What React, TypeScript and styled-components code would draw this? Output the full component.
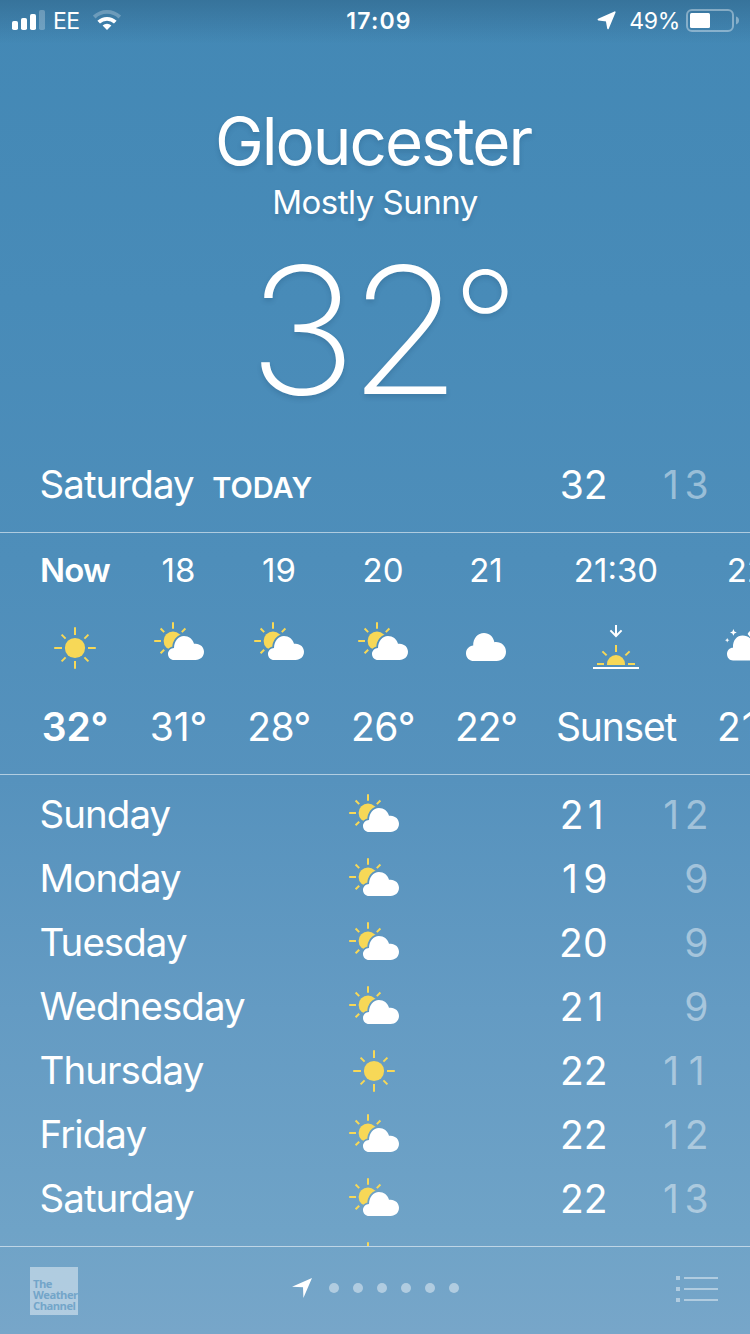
import React, { useId } from "react";
import styled, { createGlobalStyle } from "styled-components";

const GlobalStyle = createGlobalStyle`
  *, *::before, *::after { box-sizing: border-box; }
  html, body { margin: 0; padding: 0; }
  body { background: #4589b6; }
  svg { display: block; flex: none; }
`;

const SUN = "#f7d857";
const LINE = "rgba(255, 255, 255, 0.55)";
const FAINT = "rgba(255, 255, 255, 0.44)";

const Screen = styled.div`
  width: 750px;
  height: 1334px;
  overflow: hidden;
  display: flex;
  flex-direction: column;
  color: #fff;
  font-family: "Inter", "Liberation Sans", sans-serif;
  font-weight: 400;
  background:
    linear-gradient(to bottom, rgba(20, 55, 80, 0.26) 0, rgba(20, 55, 80, 0) 44px),
    linear-gradient(to bottom, #4388b5 0, #488bb8 300px, #4e8eba 560px, #5692bd 780px, #649bc3 1010px, #6fa3c7 1230px, #77a6c9 1334px);
`;

const StatusBar = styled.header`
  display: grid;
  grid-template-columns: 1fr auto 1fr;
  align-items: center;
  height: 40px;
  padding: 0 11px 0 12px;
  font-size: 23px;
  line-height: 38px;
`;

const StatusSide = styled.div<{ $end?: boolean }>`
  display: flex;
  align-items: center;
  justify-content: ${(p) => (p.$end ? "flex-end" : "flex-start")};
`;

const Carrier = styled.span`
  padding-top: 2px;
  margin: 0 13px 0 8px;
  letter-spacing: -0.5px;
`;

const Clock = styled.span`
  padding: 2px 0 0 7px;
  font-weight: 600;
  letter-spacing: 1.2px;
`;

const ArrowSlot = styled.span`
  padding-top: 1px;
`;

const Percent = styled.span`
  padding-top: 2px;
  margin: 0 6px 0 12px;
  letter-spacing: -0.3px;
`;

const Summary = styled.section`
  display: flex;
  flex-direction: column;
  align-items: center;
  padding-top: 61px;
  text-shadow: 0 3px 5px rgba(20, 60, 95, 0.2);
`;

const City = styled.h1`
  margin: 0 0 -1px;
  padding: 1px 4px 0 0;
  font-size: 65.5px;
  line-height: 80px;
  font-weight: 400;
  letter-spacing: -2.05px;
`;

const Condition = styled.div`
  font-size: 33px;
  line-height: 43px;
  letter-spacing: -0.5px;
`;

const Temperature = styled.div`
  padding-left: 16px;
  font-size: 176px;
  line-height: 212px;
  font-weight: 200;
`;

const TemperatureDigits = styled.span`
  display: inline-block;
  letter-spacing: -8px;
  transform: scaleX(1.04);
`;

const Degree = styled.span`
  margin-left: 3px;
  font-size: 145px;
  line-height: 0;
  font-weight: 250;
  letter-spacing: -4.5px;
  vertical-align: 18px;
`;

const Row = styled.div`
  display: grid;
  grid-template-columns: 1fr 50px 1fr;
  align-items: center;
  height: 64px;
  padding: 0 41.5px 0 39.5px;
  font-size: 39px;
  line-height: 64px;
`;

const Day = styled.div`
  display: flex;
  align-items: baseline;
  padding-bottom: 2px;
  white-space: nowrap;
  font-size: 38.5px;
  line-height: 62px;
  letter-spacing: -0.95px;
`;

const TodayTag = styled.span`
  margin-left: 18.5px;
  font-size: 29px;
  line-height: 1;
  font-weight: 600;
  letter-spacing: 0;
`;

const Range = styled.div`
  display: grid;
  grid-template-columns: 1fr 101px;
  justify-items: end;
`;

/* The digit 1 is narrow: open it up so that every digit keeps the same column. */
const Degrees = styled.span<{ $value: string; $low?: boolean }>`
  letter-spacing: ${(p) => (p.$value.startsWith("1") ? 5.5 : 0) + (p.$value.endsWith("1") ? 4 : 0)}px;
  margin-right: ${(p) => (p.$value.startsWith("1") ? -5.5 : 0)}px;
  color: ${(p) => (p.$low ? FAINT : "#fff")};
`;

const TodaySection = styled.section`
  height: 97px;
  padding-top: 17px;
  border-bottom: 1px solid ${LINE};
`;

const Hourly = styled.section`
  display: flex;
  height: 242px;
  padding: 17px 0 0 23px;
  overflow: hidden;
  border-bottom: 1px solid ${LINE};
`;

const Hour = styled.div<{ $width: number; $now?: boolean }>`
  flex: none;
  width: ${(p) => p.$width}px;
  display: flex;
  flex-direction: column;
  align-items: center;
  white-space: nowrap;
  font-weight: ${(p) => (p.$now ? 600 : 400)};
`;

const HourTime = styled.div<{ $tight: number }>`
  font-size: 33px;
  line-height: 40px;
  letter-spacing: ${(p) => p.$tight}px;
`;

const HourIcon = styled.div<{ $drop: number }>`
  height: 117px;
  padding-top: ${(p) => p.$drop}px;
`;

const HourTemp = styled.div<{ $tight: number }>`
  font-size: 39px;
  line-height: 40px;
  letter-spacing: ${(p) => p.$tight}px;
`;

const Daily = styled.section`
  height: 471px;
  padding-top: 8px;
  overflow: hidden;
`;

const DayIcon = styled.div<{ $sun: boolean }>`
  display: flex;
  justify-content: center;
  padding-bottom: ${(p) => (p.$sun ? 0 : 3)}px;
`;

const Toolbar = styled.footer`
  display: grid;
  grid-template-columns: 1fr auto 1fr;
  align-items: start;
  height: 88px;
  padding: 20px 31px 0 30px;
  border-top: 1px solid ${LINE};
`;

const ChannelLogo = styled.div`
  width: 48px;
  height: 48px;
  padding: 11px 0 0 3px;
  background: rgba(255, 255, 255, 0.44);
  color: #73a5c9;
  font-family: "Open Sans", "Noto Sans", sans-serif;
  font-size: 11.2px;
  line-height: 11.2px;
  font-weight: 700;
  letter-spacing: -0.5px;
`;

const Pager = styled.div`
  display: flex;
  align-items: center;
  gap: 14px;
  height: 42px;
  padding-left: 1px;
`;

const PagerArrow = styled.div`
  margin-right: 3px;
`;

const Dot = styled.span`
  width: 10px;
  height: 10px;
  border-radius: 50%;
  background: ${FAINT};
`;

const ListButton = styled.div`
  display: flex;
  justify-content: flex-end;
  padding: 9px 1px 0 0;
`;

function SignalIcon() {
  return (
    <svg width="33" height="20" viewBox="0 0 33 20" fill="#fff">
      <rect x="0" y="11" width="6" height="9" rx="1.8" />
      <rect x="9" y="8" width="6" height="12" rx="1.8" />
      <rect x="18" y="4" width="6" height="16" rx="1.8" />
      <rect x="27" y="0" width="6" height="20" rx="1.8" opacity="0.25" />
    </svg>
  );
}

function WifiIcon() {
  return (
    <svg width="28" height="20" viewBox="0 0 28 20" fill="none" stroke="#fff">
      <path d="M1.2 7.1 A18.4 18.4 0 0 1 26.8 7.1" strokeWidth="3.8" opacity="0.25" />
      <path d="M5.7 12.2 A12 12 0 0 1 22.3 12.2" strokeWidth="3.8" />
      <path d="M14 20 L9.6 15.6 A6.2 6.2 0 0 1 18.4 15.6 Z" fill="#fff" stroke="none" />
    </svg>
  );
}

function StatusArrow() {
  return (
    <svg width="20" height="19" viewBox="0 0 20 19" fill="#fff" stroke="#fff" strokeWidth="1.6" strokeLinejoin="round">
      <path d="M1.4 8.6 L17.8 1.2 L11 17.4 L9.6 9.6 Z" />
    </svg>
  );
}

function BatteryIcon() {
  return (
    <svg width="53" height="23" viewBox="0 0 53 23">
      <rect x="1" y="1" width="46" height="21" rx="5" fill="none" stroke="#fff" strokeWidth="2" opacity="0.38" />
      <rect x="4" y="4" width="20" height="15" rx="1.5" fill="#fff" />
      <path d="M50 7.6 Q53 8.6 53 11.5 Q53 14.4 50 15.4 Z" fill="#fff" opacity="0.38" />
    </svg>
  );
}

function SunIcon() {
  return (
    <svg width="42" height="42" viewBox="0 0 42 42" stroke={SUN} strokeWidth="2">
      <circle cx="21" cy="21" r="10.1" fill={SUN} stroke="none" />
      <path d="M21 0.2 V8 M21 34 V41.8 M0.2 21 H8 M34 21 H41.8 M7.6 7.6 L11.6 11.6 M30.4 30.4 L34.4 34.4 M7.6 34.4 L11.6 30.4 M30.4 11.6 L34.4 7.6" />
    </svg>
  );
}

function SunCloudIcon() {
  const id = useId();
  const cloud =
    "M20 38 C16.7 38 14 35.4 14 32 C14 28.6 16.8 26.2 20 26 C20.1 19 24.3 14 29.9 14 C34.9 14 38.6 17 40 21.8 C45.6 20.9 50 24.8 50 29.8 C50 34.6 46.4 38 41.6 38 Z";
  return (
    <svg width="50" height="39" viewBox="0 0 50 39">
      <mask id={id} maskUnits="userSpaceOnUse" x="0" y="0" width="50" height="39">
        <rect width="50" height="39" fill="#fff" />
        <path d={cloud} fill="#000" stroke="#000" strokeWidth="3.6" />
      </mask>
      <circle cx="19" cy="18.9" r="9.4" fill={SUN} mask={`url(#${id})`} />
      <path
        d="M19 0.2 V6.8 M0.2 19 H7 M6.6 6.5 L10.2 10.1 M31.4 6.5 L27.8 10.1 M6.6 31.3 L10.2 27.7"
        stroke={SUN}
        strokeWidth="2"
      />
      <path d={cloud} fill="#fff" />
    </svg>
  );
}

function CloudIcon() {
  return (
    <svg width="40" height="28" viewBox="0 0 40 28" fill="#fff">
      <path d="M8 28 C3.4 28 0 24.8 0 20.4 C0 16 3.3 13 7.2 12.6 C7 5.4 11.8 0 18 0 C23.4 0 27.3 3.6 28.4 9.2 C34.8 8.4 40 12.8 40 18.8 C40 24.2 36 28 30.6 28 Z" />
    </svg>
  );
}

function SunsetIcon() {
  return (
    <svg width="46" height="44" viewBox="0 0 46 44" fill="none">
      <path d="M23 0 V10.5 M17.4 5.4 L23 11 L28.6 5.4" stroke="#fff" strokeWidth="2" />
      <path d="M14 40 V39 A9 9 0 0 1 32 39 V40 Z" fill={SUN} />
      <path
        d="M23 20 V27 M4 39 H11 M35 39 H42 M9.4 26.4 L13.6 30.4 M36.6 26.4 L32.4 30.4"
        stroke={SUN}
        strokeWidth="2"
      />
      <path d="M0 43 H46" stroke="#fff" strokeWidth="2" />
    </svg>
  );
}

function NightCloudIcon() {
  return (
    <svg width="44" height="32" viewBox="0 0 44 32" fill="#fff">
      <path d="M8.4 0 L9.4 2.4 L11.8 3.4 L9.4 4.4 L8.4 6.8 L7.4 4.4 L5 3.4 L7.4 2.4 Z" />
      <path d="M2.2 9 L2.9 10.6 L4.5 11.2 L2.9 11.8 L2.2 13.6 L1.5 11.8 L0 11.2 L1.5 10.6 Z" />
      <path d="M22.6 5 A9 9 0 0 1 30 0 A10 10 0 0 0 38 12 L28 12 Z" />
      <path d="M8 31.4 C4.6 31.4 2 28.8 2 25 C2 21.5 4.6 18.8 8 18.8 C7.6 11.6 11.6 6.4 17.6 6.4 C23 6.4 26.8 9.6 28.2 14.8 C35 14 39.6 17.8 39.6 23 C39.6 28 36 31.4 31 31.4 Z" />
    </svg>
  );
}

function PageArrow() {
  return (
    <svg width="20" height="20" viewBox="0 0 20 20" fill="#fff">
      <path d="M0 8.7 L20 0 L11.4 20 L11 9.2 Z" />
    </svg>
  );
}

function ListIcon() {
  return (
    <svg width="42" height="26" viewBox="0 0 42 26" fill="#fff" opacity="0.44">
      {[0, 11, 22].map((y) => (
        <g key={y}>
          <rect x="0" y={y} width="4" height="4" />
          <rect x="8" y={y + 1} width="34" height="2" />
        </g>
      ))}
    </svg>
  );
}

type Sky = "sun" | "sunCloud" | "cloud" | "sunset" | "night";

const ICONS: Record<Sky, React.FC> = {
  sun: SunIcon,
  sunCloud: SunCloudIcon,
  cloud: CloudIcon,
  sunset: SunsetIcon,
  night: NightCloudIcon,
};

const DROPS: Record<Sky, number> = { sun: 37, sunCloud: 32, cloud: 43, sunset: 35, night: 39 };

interface HourData {
  time: string;
  sky: Sky;
  temp: string;
  width: number;
  now?: boolean;
  timeSpacing?: number;
  tempSpacing?: number;
}

const hours: HourData[] = [
  { time: "Now", sky: "sun", temp: "32°", width: 104, now: true, timeSpacing: -0.8, tempSpacing: -0.2 },
  { time: "18", sky: "sunCloud", temp: "31°", width: 103 },
  { time: "19", sky: "sunCloud", temp: "28°", width: 98, tempSpacing: -0.5 },
  { time: "20", sky: "sunCloud", temp: "26°", width: 110, tempSpacing: -0.5 },
  { time: "21", sky: "cloud", temp: "22°", width: 96, tempSpacing: -1.1 },
  { time: "21:30", sky: "sunset", temp: "Sunset", width: 164, tempSpacing: -1.2 },
  { time: "22", sky: "night", temp: "21°", width: 98, tempSpacing: 0.8 },
];

const days: { day: string; sky: Sky; high: string; low: string }[] = [
  { day: "Sunday", sky: "sunCloud", high: "21", low: "12" },
  { day: "Monday", sky: "sunCloud", high: "19", low: "9" },
  { day: "Tuesday", sky: "sunCloud", high: "20", low: "9" },
  { day: "Wednesday", sky: "sunCloud", high: "21", low: "9" },
  { day: "Thursday", sky: "sun", high: "22", low: "11" },
  { day: "Friday", sky: "sunCloud", high: "22", low: "12" },
  { day: "Saturday", sky: "sunCloud", high: "22", low: "13" },
  { day: "", sky: "sunCloud", high: "", low: "" },
];

function HighLow({ high, low }: { high: string; low: string }) {
  return (
    <Range>
      <Degrees $value={high}>{high}</Degrees>
      <Degrees $value={low} $low>
        {low}
      </Degrees>
    </Range>
  );
}

export default function App() {
  return (
    <>
      <GlobalStyle />
      <Screen>
        <StatusBar>
          <StatusSide>
            <SignalIcon />
            <Carrier>EE</Carrier>
            <WifiIcon />
          </StatusSide>
          <Clock>17:09</Clock>
          <StatusSide $end>
            <ArrowSlot>
              <StatusArrow />
            </ArrowSlot>
            <Percent>49%</Percent>
            <BatteryIcon />
          </StatusSide>
        </StatusBar>

        <Summary>
          <City>Gloucester</City>
          <Condition>Mostly Sunny</Condition>
          <Temperature>
            <TemperatureDigits>32</TemperatureDigits>
            <Degree>°</Degree>
          </Temperature>
        </Summary>

        <TodaySection>
          <Row>
            <Day>
              Saturday
              <TodayTag>TODAY</TodayTag>
            </Day>
            <span />
            <HighLow high="32" low="13" />
          </Row>
        </TodaySection>

        <Hourly>
          {hours.map((h) => {
            const Icon = ICONS[h.sky];
            return (
              <Hour key={h.time} $width={h.width} $now={h.now}>
                <HourTime $tight={h.timeSpacing ?? 0}>{h.time}</HourTime>
                <HourIcon $drop={DROPS[h.sky]}>
                  <Icon />
                </HourIcon>
                <HourTemp $tight={h.tempSpacing ?? 0}>{h.temp}</HourTemp>
              </Hour>
            );
          })}
        </Hourly>

        <Daily>
          {days.map((d, i) => {
            const Icon = ICONS[d.sky];
            return (
              <Row key={i}>
                <Day>{d.day}</Day>
                <DayIcon $sun={d.sky === "sun"}>
                  <Icon />
                </DayIcon>
                <HighLow high={d.high} low={d.low} />
              </Row>
            );
          })}
        </Daily>

        <Toolbar>
          <ChannelLogo>
            The
            <br />
            Weather
            <br />
            Channel
          </ChannelLogo>
          <Pager>
            <PagerArrow>
              <PageArrow />
            </PagerArrow>
            {[0, 1, 2, 3, 4, 5].map((n) => (
              <Dot key={n} />
            ))}
          </Pager>
          <ListButton>
            <ListIcon />
          </ListButton>
        </Toolbar>
      </Screen>
    </>
  );
}
